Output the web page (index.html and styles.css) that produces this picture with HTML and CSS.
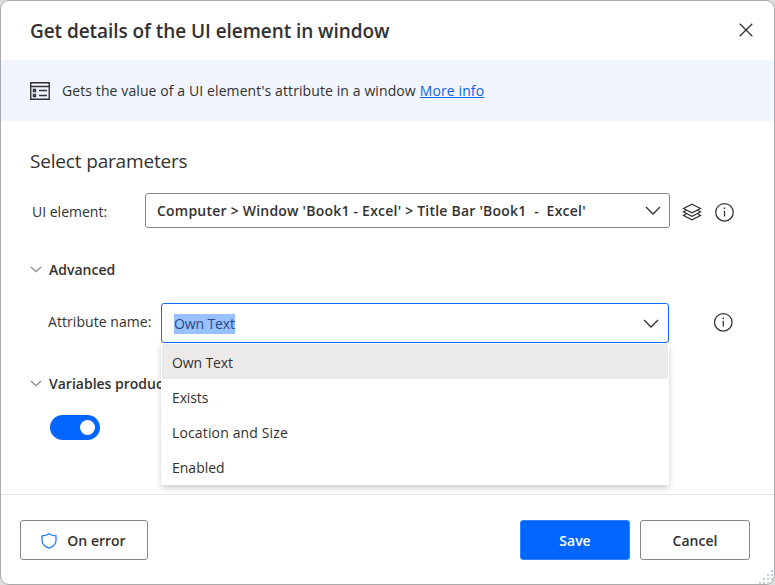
FILE: index.html
```html
<!DOCTYPE html>
<html lang="en">
<head>
<meta charset="utf-8">
<title>Get details of the UI element in window</title>
<link rel="stylesheet" href="styles.css">
</head>
<body>
<main class="dialog">
  <header class="header">
    <h1 class="title">Get details of the UI element in window</h1>
    <svg class="close" width="14" height="14" viewBox="0 0 14 14"><path d="M.7.7l12.600 12.600M13.300.7L.7 13.300"/></svg>
  </header>
  <section class="banner">
    <svg class="form-icon" width="20" height="18" viewBox="0 0 20 18"><path d="M.75.75h18.5v16.5H.75zM1 4.5h18M3.5 7.5h2v2h-2zM3.5 12.5h2v2h-2zM9 8.5h8M9 13.5h8"/></svg>
    <p class="description"><span class="about">Gets the value of a UI element's attribute in a window</span><a class="link">More info</a></p>
  </section>
  <section class="content">
    <h2 class="subtitle">Select parameters</h2>
    <div class="row element-row">
      <label class="label element-label">UI element:</label>
      <div class="select">
        <span class="path">Computer &gt; Window 'Book1 - Excel' &gt; Title Bar 'Book1 &nbsp;- &nbsp;Excel'</span>
        <svg class="chevron" width="16" height="10" viewBox="0 0 16 10"><path d="M1 1l7 7 7-7"/></svg>
      </div>
      <svg class="layers" width="20" height="19" viewBox="0 0 20 19"><path d="M10 1.200l8.500 4.300L10 9.800 1.500 5.500zM4 7.500L1.500 9 10 13.200 18.500 9 16 7.500M4 11.100l-2.500 1.400 8.500 4.300 8.500-4.300-2.500-1.400"/></svg>
      <svg class="info" width="20" height="20" viewBox="0 0 20 20"><circle cx="9.500" cy="10.300" r="8.800"/><path d="M9.500 8.800v5.700"/><path class="dot" d="M9.500 5.600v1.500"/></svg>
    </div>
    <div class="section-title"><svg class="caret" width="12" height="7" viewBox="0 0 12 7"><path d="M1 1l5 4.700L11 1"/></svg><span class="advanced">Advanced</span></div>
    <div class="row attribute-row">
      <label class="label attribute-label">Attribute name:</label>
      <div class="combo">
        <div class="combo-field">
          <span class="selected">Own Text</span>
          <svg class="chevron" width="16" height="10" viewBox="0 0 16 10"><path d="M1 1l7 7 7-7"/></svg>
        </div>
        <ul class="menu">
          <li class="option active"><span class="own">Own Text</span></li>
          <li class="option"><span class="exists">Exists</span></li>
          <li class="option"><span class="location">Location and Size</span></li>
          <li class="option"><span class="enabled">Enabled</span></li>
        </ul>
      </div>
      <svg class="info" width="20" height="20" viewBox="0 0 20 20"><circle cx="10.300" cy="10.300" r="8.800"/><path d="M10.300 8.800v5.700"/><path class="dot" d="M10.300 5.600v1.500"/></svg>
    </div>
    <div class="section-title variables"><svg class="caret" width="12" height="7" viewBox="0 0 12 7"><path d="M1 1l5 4.700L11 1"/></svg><span class="produced">Variables produced</span></div>
    <div class="toggle"><span class="knob"></span></div>
  </section>
  <footer class="footer">
    <button class="button error"><svg class="shield" width="16" height="16" viewBox="0 0 16 16"><path d="M8 .8C6 2.300 3.500 2.800 1 2.800v4.700c0 3.500 2.800 6 7 7.700 4.200-1.700 7-4.200 7-7.700V2.800C12.500 2.800 10 2.300 8 .8z"/></svg><span class="error-text">On error</span></button>
    <button class="button save">Save</button>
    <button class="button cancel">Cancel</button>
  </footer>
  <svg class="grip" width="14" height="14" viewBox="0 0 14 14"><path d="M12 0h2v2h-2zM12 4h2v2h-2zM8 4h2v2H8zM12 8h2v2h-2zM8 8h2v2H8zM4 8h2v2H4zM12 12h2v2h-2zM8 12h2v2H8zM4 12h2v2H4zM0 12h2v2H0z"/></svg>
</main>
</body>
</html>
```
FILE: styles.css
```css
* { box-sizing: border-box; }
body {
  margin: 0;
  height: 585px;
  overflow: hidden;
  background: #dedede;
  color: #323130;
  font: 14px/20px "Open Sans", "Noto Sans", sans-serif;
}
h1, h2, p, ul { margin: 0; padding: 0; }
svg { display: block; flex: none; fill: none; stroke: #323130; stroke-width: 1.25; }
span, h1, h2, label, a { white-space: nowrap; }
.dialog {
  position: relative;
  display: flex;
  flex-direction: column;
  width: 775px;
  height: 585px;
  border: 1px solid #ababab;
  border-radius: 9px;
  background: #fff;
  overflow: hidden;
}
.header { display: flex; justify-content: space-between; align-items: center; height: 59px; padding: 0 21px 0 29px; }
.title { font-size: 19px; line-height: 28px; font-weight: 600; letter-spacing: -.06px; }
.close { margin-top: -1px; }
.banner { display: flex; align-items: center; height: 61px; padding-left: 29px; gap: 12px; background: #f0f5ff; }
.form-icon { stroke-width: 1.4; }
.description { display: flex; gap: 4px; letter-spacing: .1px; }
.link { color: #0f62e6; text-decoration: underline; }
.content { flex: none; height: 373px; padding: 26px 0 0 29px; }
.subtitle { font-size: 19px; line-height: 28px; font-weight: 400; letter-spacing: -.17px; }
.row { display: flex; }
.element-row { margin-top: 18px; height: 35px; }
.element-label { width: 115px; padding: 9px 0 0 2px; }
.select { display: flex; align-items: center; justify-content: space-between; width: 525px; height: 35px; padding: 0 8px 0 11px; border: 1px solid #8a8886; border-radius: 3px; font-weight: 600; }
.path { letter-spacing: .22px; }
.layers { margin: 10px 0 0 12px; }
.info { margin: 9px 0 0 13px; }
.dot { stroke-width: 1.5; }
.section-title { display: flex; align-items: center; gap: 7px; height: 20px; margin-top: 32px; font-weight: 600; }
.caret { stroke: #8a8886; margin-top: -2px; }
.attribute-row { height: 40px; margin-top: 23px; }
.attribute-label { width: 131px; padding: 9px 0 0 18px; letter-spacing: .06px; }
.combo { position: relative; width: 508px; }
.combo-field { display: flex; align-items: center; justify-content: space-between; height: 40px; padding: 1px 9px 0 12px; border: 1px solid #0f6cfd; border-radius: 3px; background: #fff; }
.selected { height: 20px; color: #244a86; background: #99c0ff; letter-spacing: -.12px; }
.menu { position: absolute; top: 40px; left: 0; width: 508px; height: 142px; padding: 1px 1px 0; list-style: none; background: #fff; box-shadow: 0 3px 6px rgba(0,0,0,.2); z-index: 1; }
.option { display: flex; align-items: center; height: 35px; padding: 2px 0 0 10px; }
.active { background: #edebe9; }
.own, .exists { letter-spacing: -.12px; }
.location { letter-spacing: .14px; }
.attribute-row .info { margin-left: 44px; }
.variables { margin-top: 31px; }
.toggle { display: flex; align-items: center; justify-content: flex-end; width: 50px; height: 25px; margin: 21px 0 0 20px; padding-right: 5px; border-radius: 13px; background: #0066ff; }
.knob { width: 15px; height: 15px; border-radius: 50%; background: #fff; }
.footer { display: flex; gap: 10px; height: 90px; padding: 25px 24px 0 19px; border-top: 1px solid #e5e5e5; }
.button { display: flex; align-items: center; justify-content: center; width: 110px; height: 40px; padding: 0; border: 1px solid #8a8886; border-radius: 3px; background: #fff; color: #323130; font: 600 14px/20px "Open Sans", sans-serif; }
.button { padding-top: 1px; }
.error { width: 128px; margin-right: auto; padding-right: 1px; gap: 10px; }
.shield { stroke: #1677ff; }
.save { border-color: #3385ff; background: #0066ff; color: #fff; }
.grip { position: absolute; right: 1px; bottom: 0; fill: #c3cbdc; stroke: none; }
```
